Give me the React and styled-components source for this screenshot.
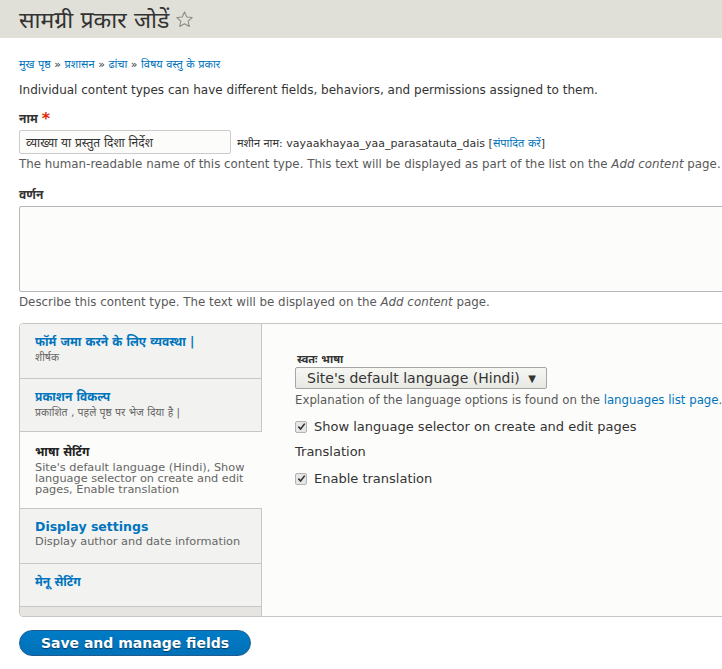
import React from "react";
import styled, { createGlobalStyle } from "styled-components";

const GlobalStyle = createGlobalStyle`
  html, body {
    margin: 0;
    padding: 0;
    background: #fff;
    overflow: hidden;
  }
  body {
    font-family: "DejaVu Sans", "Noto Sans", sans-serif;
    font-size: 13px;
    color: #333;
  }
`;

const Page = styled.div`
  width: 1200px;
`;

const Header = styled.div`
  background: #e0e0d8;
  height: 38px;
  display: flex;
  align-items: center;
  padding: 0 19px;
`;

const Title = styled.h1`
  margin: 0;
  font-size: 23px;
  font-weight: normal;
  color: #333;
  display: flex;
  align-items: center;
  gap: 6px;
`;

const Main = styled.div`
  padding: 18px 19px 0;
`;

const Breadcrumb = styled.div`
  font-size: 11px;
  color: #0074bd;
  margin-bottom: 12px;
  span {
    color: #333;
  }
`;

const Intro = styled.p`
  margin: 0 0 13px;
  font-size: 12px;
`;

const Label = styled.div`
  font-weight: bold;
  font-size: 12px;
  margin-bottom: 3px;
  display: flex;
  align-items: center;
  gap: 4px;
  em {
    color: #e62600;
    font-style: normal;
    font-size: 16px;
    line-height: 10px;
  }
`;

const Row = styled.div`
  display: flex;
  align-items: center;
  gap: 6px;
`;

const TextInput = styled.div`
  width: 212px;
  height: 24px;
  box-sizing: border-box;
  border: 1px solid #ccc;
  border-radius: 2px;
  background: #fcfcfa;
  padding: 0 6px;
  display: flex;
  align-items: center;
  font-size: 12px;
  color: #333;
`;

const MachineName = styled.div`
  font-size: 11px;
  color: #333;
  a {
    color: #0074bd;
    text-decoration: none;
  }
`;

const Help = styled.div`
  font-size: 11.85px;
  color: #595959;
  margin-top: 3px;
  white-space: nowrap;
`;

const Field = styled.div`
  margin-bottom: ${(p) => p.$gap || "18px"};
`;

const TextArea = styled.div`
  height: 86px;
  box-sizing: border-box;
  border: 1px solid #b8b8b8;
  border-radius: 2px;
  background: #fcfcfa;
  width: 1100px;
`;

const Tabs = styled.div`
  display: flex;
  width: 1100px;
  height: 294px;
  box-sizing: border-box;
  border: 1px solid #c6c6c3;
  border-radius: 4px 0 0 4px;
  overflow: hidden;
  margin-top: 14px;
`;

const TabMenu = styled.div`
  width: 241px;
  flex-shrink: 0;
  background: #e6e5e1;
  display: flex;
  flex-direction: column;
  border-right: 1px solid #c6c6c3;
`;

const TabItem = styled.div`
  background: ${(p) => (p.$active ? "#fcfcfa" : "#f2f2f0")};
  border-bottom: 1px solid #c6c6c3;
  padding: ${(p) => p.$pad || "9px 15px 10px"};
  height: ${(p) => p.$h}px;
  box-sizing: border-box;
  margin-right: ${(p) => (p.$active ? "-1px" : "0")};
  box-shadow: ${(p) =>
    p.$active ? "0 5px 5px -5px rgba(0,0,0,0.3)" : "none"};
  position: relative;
`;

const TabTitle = styled.div`
  font-weight: bold;
  font-size: ${(p) => (p.$latin ? "12.5px" : "12px")};
  color: ${(p) => (p.$active ? "#222" : "#0074bd")};
  margin-bottom: 2px;
`;

const TabSummary = styled.div`
  font-size: ${(p) => (p.$latin ? "11.3px" : "10.5px")};
  color: #666;
  line-height: 11px;
`;

const Pane = styled.div`
  flex: 1;
  background: #fcfcfa;
  padding: 27px 33px;
`;

const SmallLabel = styled.div`
  font-weight: bold;
  font-size: 11px;
  color: #333;
  margin-bottom: 1px;
  padding-left: 2px;
`;

const Select = styled.div`
  width: 252px;
  height: 22px;
  box-sizing: border-box;
  border: 1px solid #a6a6a6;
  border-radius: 2px;
  background: linear-gradient(#f6f6f3, #e8e8e3);
  display: flex;
  align-items: center;
  justify-content: space-between;
  padding: 0 10px 0 11px;
  font-size: 14px;
  color: #333;
`;

const Arrow = styled.span`
  font-size: 10px;
  color: #333;
`;

const Explain = styled.div`
  font-size: 11.75px;
  color: #595959;
  margin: 4px 0 12px;
  white-space: nowrap;
  a {
    color: #0074bd;
    text-decoration: none;
  }
`;

const Check = styled.label`
  display: flex;
  align-items: center;
  gap: 7px;
  font-size: 13px;
  color: #333;
  margin-bottom: ${(p) => p.$mb || "10px"};
`;

const Box = styled.span`
  width: 12px;
  height: 12px;
  box-sizing: border-box;
  border: 1px solid #b3b3b3;
  border-radius: 2px;
  background: #e6e6e6;
  display: flex;
  align-items: center;
  justify-content: center;
`;

const Plain = styled.div`
  font-size: 13px;
  color: #333;
  margin-bottom: 12px;
`;

const Button = styled.button`
  margin-top: 13px;
  width: 232px;
  height: 26px;
  border: 1px solid #1e5c90;
  border-radius: 20px;
  background: linear-gradient(#007bc6, #0071b8);
  color: #fff;
  font-family: "DejaVu Sans", sans-serif;
  font-weight: bold;
  font-size: 14px;
  text-shadow: 0 1px 1px rgba(0, 0, 0, 0.5);
  padding: 0;
`;

const CheckMark = () => (
  <Box>
    <svg width="9" height="9" viewBox="0 0 10 10">
      <path d="M1.5 5.2 L4 7.8 L8.6 1.8" stroke="#333" strokeWidth="1.8" fill="none" />
    </svg>
  </Box>
);

const Star = () => (
  <svg width="19" height="19" viewBox="0 0 24 24">
    <path
      d="M12 2.5l2.9 6.3 6.8.7-5.1 4.6 1.5 6.8L12 17.4l-6.1 3.5 1.5-6.8-5.1-4.6 6.8-.7z"
      fill="none"
      stroke="#8a8a80"
      strokeWidth="1.3"
      strokeLinejoin="round"
    />
  </svg>
);

export default function App() {
  return (
    <Page>
      <GlobalStyle />
      <Header>
        <Title>
          सामग्री प्रकार जोडें <Star />
        </Title>
      </Header>
      <Main>
        <Breadcrumb>
          मुख पृष्ठ <span>»</span> प्रशासन <span>»</span> ढांचा <span>»</span> विषय वस्तु के प्रकार
        </Breadcrumb>
        <Intro>
          Individual content types can have different fields, behaviors, and permissions assigned to them.
        </Intro>

        <Field $gap="15px">
          <Label>
            नाम <em>*</em>
          </Label>
          <Row>
            <TextInput>व्याख्या या प्रस्तुत दिशा निर्देश</TextInput>
            <MachineName>
              मशीन नाम: vayaakhayaa_yaa_parasatauta_dais [<a>संपादित करें</a>]
            </MachineName>
          </Row>
          <Help>
            The human-readable name of this content type. This text will be displayed as part of the list on the{" "}
            <i>Add content</i> page. This name must be unique.
          </Help>
        </Field>

        <Field $gap="0">
          <Label>वर्णन</Label>
          <TextArea />
          <Help>
            Describe this content type. The text will be displayed on the <i>Add content</i> page.
          </Help>
        </Field>

        <Tabs>
          <TabMenu>
            <TabItem $h={55}>
              <TabTitle>फॉर्म जमा करने के लिए व्यवस्था |</TabTitle>
              <TabSummary>शीर्षक</TabSummary>
            </TabItem>
            <TabItem $h={53}>
              <TabTitle>प्रकाशन विकल्प</TabTitle>
              <TabSummary>प्रकाशित , पहले पृष्ठ पर भेज दिया है |</TabSummary>
            </TabItem>
            <TabItem $h={77} $active $pad="11px 15px 10px">
              <TabTitle $active>भाषा सेटिंग</TabTitle>
              <TabSummary $latin>
                Site's default language (Hindi), Show language selector on create and edit pages, Enable translation
              </TabSummary>
            </TabItem>
            <TabItem $h={55} $pad="10px 15px">
              <TabTitle $latin>Display settings</TabTitle>
              <TabSummary $latin>Display author and date information</TabSummary>
            </TabItem>
            <TabItem $h={43} $pad="9px 15px">
              <TabTitle>मेनू सेटिंग</TabTitle>
            </TabItem>
          </TabMenu>
          <Pane>
            <SmallLabel>स्वतः भाषा</SmallLabel>
            <Select>
              Site's default language (Hindi) <Arrow>▼</Arrow>
            </Select>
            <Explain>
              Explanation of the language options is found on the <a>languages list page</a>.
            </Explain>
            <Check>
              <CheckMark /> Show language selector on create and edit pages
            </Check>
            <Plain>Translation</Plain>
            <Check>
              <CheckMark /> Enable translation
            </Check>
          </Pane>
        </Tabs>

        <Button>Save and manage fields</Button>
      </Main>
    </Page>
  );
}
